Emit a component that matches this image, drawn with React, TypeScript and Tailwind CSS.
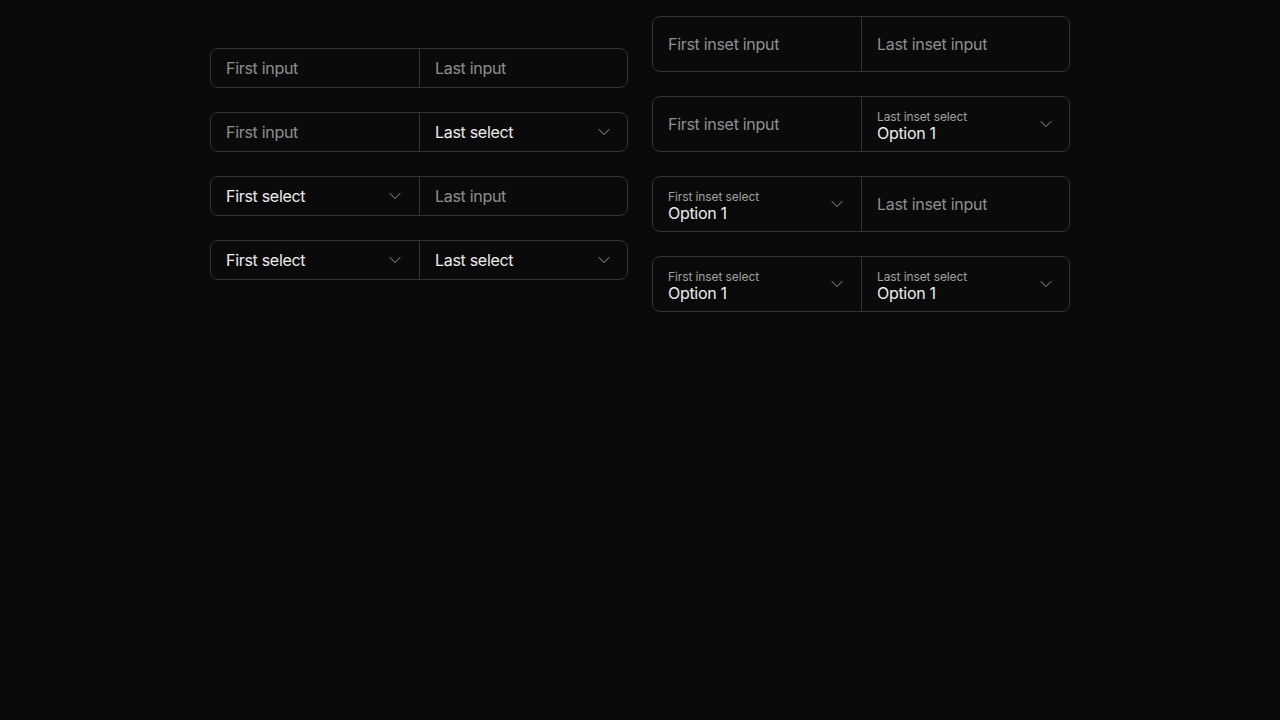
import { ChevronDown } from "lucide-react"

const font = { fontFamily: "Inter, 'Noto Sans', sans-serif" }

function cellEdge(first?: boolean) {
  return first ? "w-[210px] shrink-0 rounded-l-lg pr-[14px]" : "-ml-px flex-1 rounded-r-lg pr-[13px]"
}

function Input({ placeholder, first }: { placeholder: string; first?: boolean }) {
  return (
    <div className={`flex h-10 items-center border border-[#333333] pl-[15px] ${cellEdge(first)}`}>
      <span className="text-base tracking-[-0.3px] text-[#8f8f8f]">{placeholder}</span>
    </div>
  )
}

function Select({ label, first }: { label: string; first?: boolean }) {
  return (
    <div className={`flex h-10 items-center justify-between border border-[#333333] pl-[15px] ${cellEdge(first)}`}>
      <span className="text-base tracking-[-0.3px] text-[#ededed]">{label}</span>
      <ChevronDown size={20} strokeWidth={1.2} className="text-[#999999]" />
    </div>
  )
}

function InsetInput({ placeholder, first }: { placeholder: string; first?: boolean }) {
  return (
    <div className={`flex h-14 items-center border border-[#333333] pl-[15px] ${cellEdge(first)}`}>
      <span className="text-base tracking-[-0.3px] text-[#8f8f8f]">{placeholder}</span>
    </div>
  )
}

function InsetSelect({ label, first }: { label: string; first?: boolean }) {
  return (
    <div className={`flex h-14 items-center justify-between border border-[#333333] pl-[15px] ${cellEdge(first)}`}>
      <div className="flex flex-col self-stretch pt-[12px]">
        <span className="text-xs leading-4 tracking-[-0.1px] text-[#a1a1a1]">{label}</span>
        <span className="-mt-[2px] text-base leading-5 tracking-[-0.3px] text-[#ededed]">Option 1</span>
      </div>
      <ChevronDown size={20} strokeWidth={1.2} className="text-[#999999]" />
    </div>
  )
}

export default function App() {
  return (
    <div className="min-h-screen bg-[#0a0a0a] pt-4" style={font}>
      <div className="flex items-center justify-center gap-6">
        <div className="flex w-[418px] flex-col gap-6">
          <div className="flex">
            <Input placeholder="First input" first />
            <Input placeholder="Last input" />
          </div>
          <div className="flex">
            <Input placeholder="First input" first />
            <Select label="Last select" />
          </div>
          <div className="flex">
            <Select label="First select" first />
            <Input placeholder="Last input" />
          </div>
          <div className="flex">
            <Select label="First select" first />
            <Select label="Last select" />
          </div>
        </div>
        <div className="flex w-[418px] flex-col gap-6">
          <div className="flex">
            <InsetInput placeholder="First inset input" first />
            <InsetInput placeholder="Last inset input" />
          </div>
          <div className="flex">
            <InsetInput placeholder="First inset input" first />
            <InsetSelect label="Last inset select" />
          </div>
          <div className="flex">
            <InsetSelect label="First inset select" first />
            <InsetInput placeholder="Last inset input" />
          </div>
          <div className="flex">
            <InsetSelect label="First inset select" first />
            <InsetSelect label="Last inset select" />
          </div>
        </div>
      </div>
    </div>
  )
}
